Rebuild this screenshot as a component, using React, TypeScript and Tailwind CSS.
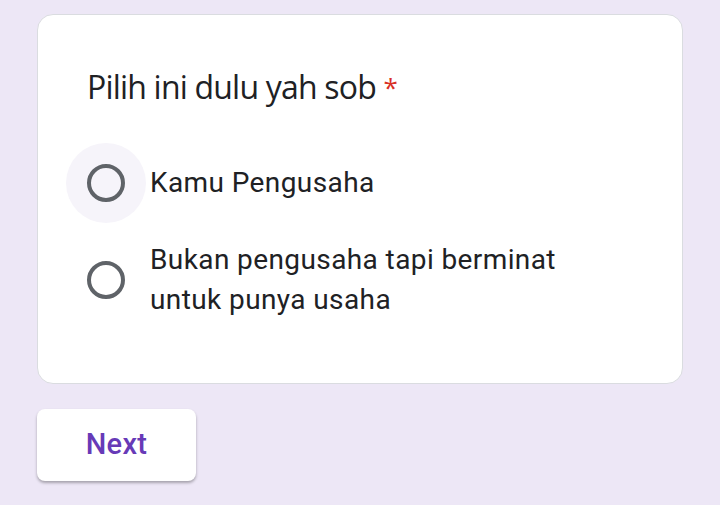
export default function App() {
  return (
    <div className="w-[720px] h-[505px] bg-[#ede7f6] pt-[14px] px-[37px] font-['Roboto',sans-serif]">
      <div className="bg-white border border-[#dadce0] rounded-[16px] h-[370px] pl-[49px] pr-[40px] pt-[52px]">
        <h1 className="text-[32px] leading-[40px] text-[#202124] font-['Open_Sans',sans-serif] tracking-[-0.8px]">
          Pilih ini dulu yah sob{" "}
          <span className="text-[#d93025] text-[26px] align-top">*</span>
        </h1>
        <div className="mt-[56px] flex flex-col gap-[37px]">
          <label className="flex items-center gap-[25px]">
            <span className="relative w-[38px] h-[38px] shrink-0">
              <span className="absolute -inset-[21px] rounded-full bg-[#f6f4fa]" />
              <span className="absolute inset-0 rounded-full border-[4px] border-[#5f6368]" />
            </span>
            <span className="text-[28px] leading-[40px] text-[#202124] tracking-[0.4px]">Kamu Pengusaha</span>
          </label>
          <label className="flex items-center gap-[25px]">
            <span className="w-[38px] h-[38px] shrink-0 rounded-full border-[4px] border-[#5f6368]" />
            <span className="text-[28px] leading-[40px] text-[#202124] tracking-[0.4px] w-[440px]">
              Bukan pengusaha tapi berminat untuk punya usaha
            </span>
          </label>
        </div>
      </div>
      <button className="mt-[25px] w-[159px] h-[72px] bg-white rounded-[8px] shadow-[0_2px_3px_rgba(0,0,0,0.3)] text-[#673ab7] text-[29px] font-medium tracking-[0.3px]">
        Next
      </button>
    </div>
  );
}
